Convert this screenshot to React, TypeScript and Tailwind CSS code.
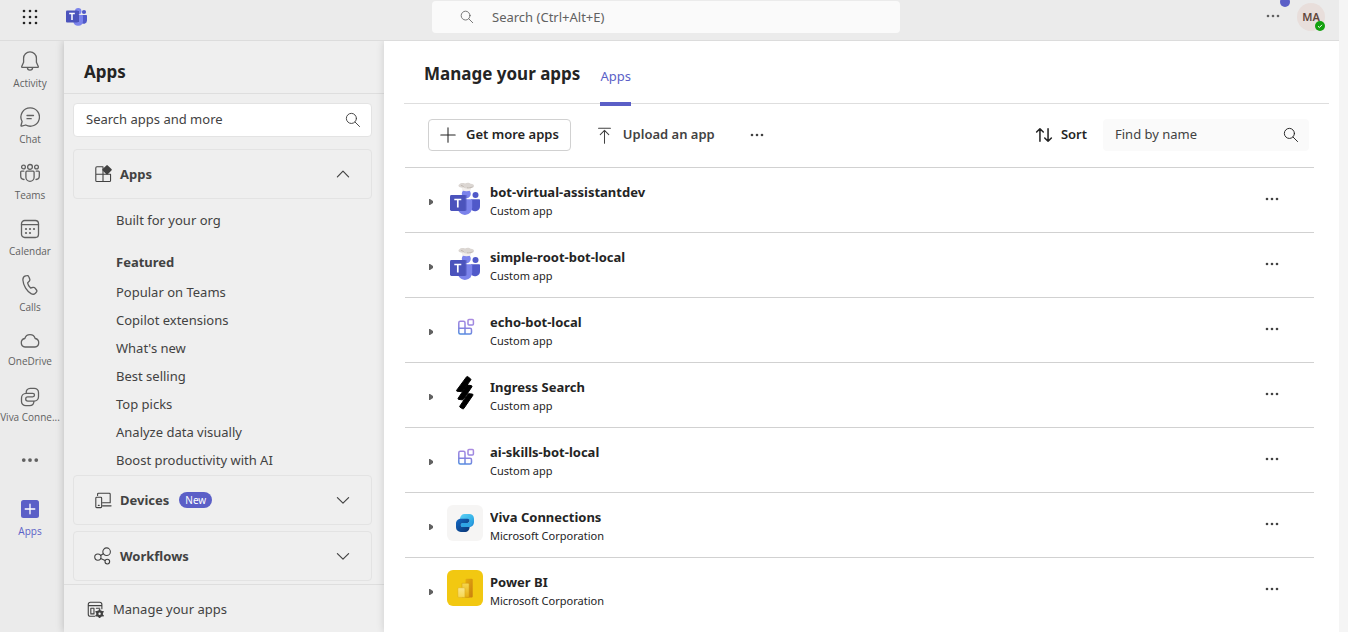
import React from "react";

type IconProps = { className?: string; children: React.ReactNode; size?: number; sw?: number };

function Icon({ className = "", children, size = 20, sw = 1.2 }: IconProps) {
  return (
    <svg
      aria-hidden="true"
      width={size}
      height={size}
      viewBox="0 0 20 20"
      fill="none"
      stroke="currentColor"
      strokeWidth={sw}
      strokeLinecap="round"
      strokeLinejoin="round"
      className={"shrink-0 " + className}
    >
      {children}
    </svg>
  );
}

const BellIcon = () => (
  <Icon sw={1.300}>
    <path d="M10 .8a6.400 6.400 0 0 0-6.400 6.400v4L1.700 15.600c-.1.400.1.800.6.800h15.400c.5 0 .7-.4.600-.8l-1.900-4.400v-4A6.400 6.400 0 0 0 10 .8Z" />
    <path d="M7.400 16.600a2.600 2.600 0 0 0 5.200 0" />
  </Icon>
);
const ChatIcon = () => (
  <Icon sw={1.300}>
    <path d="M10.200.8a9.200 9.200 0 1 1-4.500 17.200l-4 1.200c-.4.1-.8-.2-.7-.7l1.100-4A9.200 9.200 0 0 1 10.200.8Z" />
    <path d="M7 8.500h6.500M7 11.700h4.200" />
  </Icon>
);
const TeamsIcon = () => (
  <Icon sw={1.300}>
    <circle cx="10" cy="3.900" r="2.400" />
    <circle cx="3.500" cy="4" r="1.900" />
    <circle cx="16.500" cy="4" r="1.900" />
    <path d="M6.900 8.200h6.200c.6 0 1 .4 1 1v5a4.100 4.100 0 0 1-8.200 0v-5c0-.6.4-1 1-1Z" />
    <path d="M3.800 8.200H1.600c-.5 0-.9.400-.9.900v4a3.400 3.400 0 0 0 3.300 3.400M16.200 8.200h2.200c.5 0 .9.400.9.900v4a3.400 3.400 0 0 1-3.300 3.400" />
  </Icon>
);
const CalendarIcon = () => (
  <Icon sw={1.300}>
    <rect x="1.500" y="1.500" width="17" height="17" rx="3.200" />
    <path d="M1.500 5.700h17" />
    <g fill="currentColor" stroke="none">
      <circle cx="6" cy="10" r="1.100" />
      <circle cx="10" cy="10" r="1.100" />
      <circle cx="14" cy="10" r="1.100" />
      <circle cx="6" cy="14" r="1.100" />
      <circle cx="10" cy="14" r="1.100" />
    </g>
  </Icon>
);
const CallIcon = () => (
  <Icon sw={1.300}>
    <path d="m5.600.9 1.200-.2c.9-.2 1.800.3 2.100 1.200l.8 2.100c.3.800.1 1.700-.5 2.300L7.600 7.900c.3 1.900 1.500 3.900 3 5.100l2.400-.6c.8-.2 1.600.1 2.100.7l1.400 1.900c.5.700.4 1.700-.2 2.300l-.9.900c-1.100 1.100-2.700 1.300-4 .6C7 16.600 3.200 10.400 2.900 5c-.1-1.900 1-3.600 2.700-4.100Z" />
  </Icon>
);
const CloudIcon = () => (
  <Icon sw={1.300}>
    <path d="M5.100 16a4.300 4.300 0 0 1-.3-8.500 5.400 5.400 0 0 1 10.400 0A4.300 4.300 0 0 1 14.900 16H5.100Z" />
  </Icon>
);
const VivaIcon = () => (
  <Icon sw={1.300}>
    <path d="M6.200 6.300C5.900 3.400 7.700 1.300 10.200 1.300h4a4.300 4.300 0 0 1 4.300 4.300v4.200a4.300 4.300 0 0 1-4.300 4.300H7.800a2 2 0 0 1 0-4.200h4.900a1.800 1.800 0 0 0 0-3.600H6.100a4.600 4.600 0 0 0-4.600 4.600v3.500a4.300 4.300 0 0 0 4.300 4.300h3.800c2.500 0 4.300-1.700 4.300-4.400" />
  </Icon>
);

function Dots({ size = 16, r = 1.300 }: { size?: number; r?: number }) {
  return (
    <svg aria-hidden="true" width={size} height={size} viewBox="0 0 16 16" fill="currentColor" className="shrink-0">
      <circle cx="3" cy="8" r={r} />
      <circle cx="8" cy="8" r={r} />
      <circle cx="13" cy="8" r={r} />
    </svg>
  );
}

function SearchIcon({ size = 16 }: { size?: number }) {
  return (
    <Icon size={size} sw={1.200}>
      <circle cx="8" cy="8" r="6.300" />
      <path d="m12.600 12.600 5.600 5.600" />
    </Icon>
  );
}

function TeamsLogo() {
  return (
    <svg aria-hidden="true" width="21" height="18" viewBox="0 0 21 18">
      <circle cx="12.200" cy="3.200" r="3.200" fill="#7b83eb" />
      <circle cx="18" cy="4" r="2.100" fill="#5059c9" />
      <path d="M15 7h5.300c.4 0 .7.300.7.700v4.800a3.300 3.300 0 0 1-6 1.900V7Z" fill="#5059c9" />
      <path d="M8 7h8.300c.4 0 .7.300.7.700v5.500a4.900 4.900 0 0 1-9.700.6L8 7Z" fill="#7b83eb" />
      <path d="M10.500 3H13v11H8.500L10.500 3Z" fill="#33389a" opacity=".65" />
      <rect y="2.600" width="12" height="12" rx="1" fill="#4b53bc" />
      <path d="M3.200 5.500h5.600M6 5.500v6.500" stroke="#fff" strokeWidth="1.500" />
    </svg>
  );
}

function BotLogo() {
  return (
    <svg aria-hidden="true" width="36" height="36" viewBox="0 0 36 36">
      <circle cx="19.300" cy="13.700" r="4.500" fill="#7b83eb" />
      <circle cx="28.500" cy="15" r="3" fill="#5059c9" />
      <path d="M24 19.300h8c.6 0 1 .4 1 1v6a5 5 0 0 1-9 3V19.300Z" fill="#5059c9" />
      <path d="M12 19.300h12.200c.6 0 1 .4 1 1v7.500a7.300 7.300 0 0 1-14.200 2.200L12 19.300Z" fill="#7b83eb" />
      <path d="M16 15h3.700v14.500c0 .9-.5 1.500-1.500 1.500H13L16 15Z" fill="#4a51b8" opacity=".55" />
      <rect x="3" y="15" width="15.700" height="16" rx="1.400" fill="#4b53bc" />
      <path d="M7.300 19.500h7M10.800 19.500v8" stroke="#fff" strokeWidth="1.700" />
      <path d="M14.500 7.500h10l-1 3c-2.500.9-5.500.9-8 0Z" fill="#f3efec" />
      <path d="M12.500 4.200c1.500-1.400 4-1.200 5.500-.7 2-1 4.500-.8 5.500.3 2.200-.1 3.800 1 3.500 2.400-.6 1.700-3.200 2.200-4.600 1.900-2.500.6-4.400.4-5.900-.5-1.800.4-4.500-.2-5-1.600-.1-.9.300-1.500 1-1.800Z" fill="#dbd6d2" />
      <path d="M14 5.400c1.300.3 2.500 1 3 1.800M20 7.800c2 .5 4 0 5.500-1" stroke="#b9b0aa" strokeWidth=".8" fill="none" />
    </svg>
  );
}

function BlocksLogo() {
  return (
    <svg aria-hidden="true" width="36" height="36" viewBox="0 0 36 36" fill="none" strokeWidth="1.500">
      <defs>
        <linearGradient id="blocks" gradientUnits="userSpaceOnUse" x1="20" y1="9" x2="16" y2="27">
          <stop offset="0" stopColor="#a98ae0" />
          <stop offset=".5" stopColor="#8b83e0" />
          <stop offset="1" stopColor="#3f8ede" />
        </linearGradient>
      </defs>
      <g stroke="url(#blocks)">
        <path d="M18 18.300v-5.500c0-.9-.6-1.500-1.500-1.500h-3.200c-.9 0-1.500.6-1.500 1.500v9.800c0 .9.600 1.500 1.500 1.500h9.700c.9 0 1.500-.6 1.500-1.500v-2.800c0-.9-.6-1.500-1.500-1.500H11.800M18 18.300v5.800" />
        <rect x="21" y="9.500" width="5.400" height="5.400" rx="1" />
      </g>
    </svg>
  );
}

function IngressLogo() {
  return (
    <svg aria-hidden="true" width="36" height="36" viewBox="0 0 36 36" stroke="#000" strokeWidth="5.600" strokeLinejoin="round">
      <g strokeWidth="1" fill="#000">
        <path d="m9.700 15.200 9.800-13.300c.4-.5.900-.5 1.300-.2l2.700 2.100c.5.400.5.800.2 1.300l-8 11c-.4.500-.8.600-1.400.5l-4.200-.3c-.5-.1-.7-.6-.4-1.100Z" />
        <path d="m11.200 23.200 8.300-12.500c.3-.5.700-.7 1.300-.6l3.500.5c.7.100.9.700.5 1.300l-8.300 12.300c-.4.500-.8.700-1.400.6l-3.500-.4c-.6-.1-.8-.6-.4-1.200Z" />
        <path d="m12.800 31.200 8-12c.3-.4.700-.6 1.200-.5l3.300.4c.7.100.9.700.5 1.300l-9 13.100c-.4.500-.8.600-1.300.2l-2.500-1.500c-.4-.3-.5-.6-.2-1Z" />
      </g>
    </svg>
  );
}

function VivaLogo() {
  return (
    <svg aria-hidden="true" width="36" height="36" viewBox="0 0 36 36">
      <defs>
        <linearGradient id="vivaA" x1="0" y1="0" x2="1" y2="1">
          <stop offset="0" stopColor="#5fd0f5" />
          <stop offset=".6" stopColor="#35b3e8" />
          <stop offset="1" stopColor="#1b7fd0" />
        </linearGradient>
        <linearGradient id="vivaB" x1="0" y1="0" x2="1" y2="1">
          <stop offset="0" stopColor="#1269c4" />
          <stop offset="1" stopColor="#0b3472" />
        </linearGradient>
      </defs>
      <rect width="36" height="36" rx="6" fill="#f6f5f4" />
      <path d="M13 14c0-3 2-5 4.600-5h4.600C25 9 27 11 27 13.800V17c0 3-2.200 5-5 5h-6c-1.500 0-2.200-1-2.200-2s.8-2 2.200-2h4.500a2 2 0 0 0 0-4H13Z" fill="url(#vivaA)" />
      <path d="M20.500 13.800h-6.700C11 13.800 9 16 9 18.500v3.800C9 25 11 27 13.800 27h4.400c2.300 0 4.200-1.700 4.500-5H16c-1.500 0-2.200-1-2.200-2s.8-2.100 2.200-2.100h4.500a2 2 0 0 0 0-4.100Z" fill="url(#vivaB)" />
      <path d="M14 20c0-1.200.8-2.100 2.200-2.100h4.600c1.200 0 2-.9 2-2 0-.4-.1-.8-.3-1.100 3 .8 3.300 4 1.500 5.700-.9 1-2.200 1.500-4 1.500h-4c-1.300 0-2-1-2-2Z" fill="#2fa5e4" />
    </svg>
  );
}

function PowerBiLogo() {
  return (
    <svg aria-hidden="true" width="36" height="36" viewBox="0 0 36 36">
      <defs>
        <linearGradient id="pbA" x1="0" y1="0" x2="1" y2="1">
          <stop offset="0" stopColor="#e6ad10" />
          <stop offset="1" stopColor="#c87e0e" />
        </linearGradient>
        <linearGradient id="pbB" x1="0" y1="0" x2="0" y2="1">
          <stop offset="0" stopColor="#f6d751" />
          <stop offset="1" stopColor="#e6ad10" />
        </linearGradient>
        <linearGradient id="pbC" x1="0" y1="0" x2="0" y2="1">
          <stop offset="0" stopColor="#f9e589" />
          <stop offset="1" stopColor="#f6d751" />
        </linearGradient>
      </defs>
      <rect width="36" height="36" rx="6" fill="#f2c811" />
      <rect x="18.500" y="8.800" width="7.200" height="18.600" rx="1" fill="url(#pbA)" />
      <path d="M15 13.300h6.200c.5 0 .9.400.9.900v13.200H15Z" fill="url(#pbB)" stroke="#c9950d" strokeWidth=".4" />
      <path d="M11.800 17.800h5.200c.5 0 .9.400.9.900v8.700h-6.100c-.5 0-.9-.4-.9-.9v-7.800c0-.5.400-.9.900-.9Z" fill="url(#pbC)" stroke="#d5a514" strokeWidth=".4" />
    </svg>
  );
}

const rail = [
  { label: "Activity", icon: <BellIcon />, gap: "gap-1" },
  { label: "Chat", icon: <ChatIcon />, gap: "gap-1" },
  { label: "Teams", icon: <TeamsIcon />, gap: "gap-1" },
  { label: "Calendar", icon: <CalendarIcon />, gap: "gap-1" },
  { label: "Calls", icon: <CallIcon />, gap: "gap-1" },
  { label: "OneDrive", icon: <CloudIcon />, gap: "gap-0.5" },
  { label: "Viva Conne...", icon: <VivaIcon />, gap: "gap-0.5" },
];

const featured = [
  "Popular on Teams",
  "Copilot extensions",
  "What's new",
  "Best selling",
  "Top picks",
  "Analyze data visually",
  "Boost productivity with AI",
];

const apps = [
  { name: "bot-virtual-assistantdev", by: "Custom app", logo: <BotLogo /> },
  { name: "simple-root-bot-local", by: "Custom app", logo: <BotLogo /> },
  { name: "echo-bot-local", by: "Custom app", logo: <BlocksLogo /> },
  { name: "Ingress Search", by: "Custom app", logo: <IngressLogo /> },
  { name: "ai-skills-bot-local", by: "Custom app", logo: <BlocksLogo /> },
  { name: "Viva Connections", by: "Microsoft Corporation", logo: <VivaLogo /> },
  { name: "Power BI", by: "Microsoft Corporation", logo: <PowerBiLogo /> },
];

function Chevron({ up = false }: { up?: boolean }) {
  return (
    <Icon size={16} sw={1.500} className="ml-auto">
      <path d={up ? "m3 13.500 7-7 7 7" : "m3 7 7 7 7-7"} />
    </Icon>
  );
}

function Section({ icon, title, badge, open = false }: { icon: React.ReactNode; title: string; badge?: string; open?: boolean }) {
  return (
    <button
      type="button"
      aria-expanded={open}
      className="flex h-[50px] w-full shrink-0 items-center rounded border border-[#e3e3e3] px-5 text-left text-[#424242]"
    >
      {icon}
      <span className="ml-2 pt-0.5 text-[13px] font-bold">{title}</span>
      {badge && (
        <span className="ml-2.5 flex h-4 items-center rounded-full bg-[#5b5fc7] px-1.5 text-[10px] text-white">{badge}</span>
      )}
      <Chevron up={open} />
    </button>
  );
}

function TopBar() {
  return (
    <header className="grid h-[41px] shrink-0 grid-cols-[1fr_468px_1fr] items-center border-b border-[#dcdcdc] bg-[#ebebeb] pr-[7px] pb-1.5">
      <div className="flex items-center gap-7 pl-[22px]">
        <button type="button" aria-label="App launcher" className="text-[#242424]">
          <svg aria-hidden="true" width="16" height="16" viewBox="0 0 16 16" fill="currentColor">
            {[2, 8, 14].map((y) => [2, 8, 14].map((x) => <circle key={x + "-" + y} cx={x} cy={y} r="1.300" />))}
          </svg>
        </button>
        <TeamsLogo />
      </div>
      <label className="flex h-8 items-center gap-[18px] rounded bg-[#fafafa] pl-7 pr-3 text-[#616161]">
        <SearchIcon size={14} />
        <input
          type="search"
          aria-label="Search"
          placeholder="Search (Ctrl+Alt+E)"
          className="min-w-0 flex-1 bg-transparent pt-0.5 text-[13px] outline-none placeholder:text-[#616161] placeholder:opacity-100"
        />
      </label>
      <div className="flex items-center justify-end gap-4 pr-[7px]">
        <button type="button" aria-label="Settings and more" className="relative mb-0.5 text-[#616161]">
          <Dots />
          <span className="absolute bottom-[17px] left-[15px] size-2.5 rounded-full bg-[#5b5fc7]" />
        </button>
        <button
          type="button"
          aria-label="Account"
          className="relative flex size-7 items-center justify-center rounded-full bg-[#e8dedb] text-[11px] font-semibold text-[#5f463c]"
        >
          MA
          <svg aria-hidden="true" width="10" height="10" viewBox="0 0 10 10" className="absolute right-0 bottom-0">
            <circle cx="5" cy="5" r="5" fill="#13a10e" />
            <path d="m3 5.200 1.400 1.300L7 3.800" stroke="#fff" strokeWidth="1" fill="none" />
          </svg>
        </button>
      </div>
    </header>
  );
}

function Rail() {
  const item = "flex h-14 w-[60px] flex-col items-center pt-2.5 whitespace-nowrap font-['Open_Sans',sans-serif] text-[10px] leading-4";
  return (
    <nav aria-label="Main" className="flex w-16 shrink-0 flex-col bg-[#ebebeb] text-[#616161]">
      {rail.map((r) => (
        <a key={r.label} href="#" className={item + " " + r.gap}>
          {r.icon}
          {r.label}
        </a>
      ))}
      <button type="button" aria-label="More apps" className="flex h-14 w-[60px] items-center justify-center pb-0.5">
        <Dots size={20} r={1.500} />
      </button>
      <a href="#" className={item + " gap-1 text-[#5b5fc7]"}>
        <svg aria-hidden="true" width="20" height="20" viewBox="0 0 20 20">
          <rect x="1" y="1" width="18" height="18" rx="2.500" fill="#5b5fc7" />
          <path d="M10 5.200v9.600M5.200 10h9.600" stroke="#fff" strokeWidth="1.300" strokeLinecap="round" />
        </svg>
        Apps
      </a>
    </nav>
  );
}

function Sidebar() {
  const link = "flex h-7 items-center";
  return (
    <aside className="relative z-10 flex w-80 shrink-0 flex-col bg-[#efefef] text-[13px] text-[#424242] shadow-[0_0_8px_rgba(0,0,0,0.22)]">
      <h2 className="flex h-[53px] shrink-0 items-center border-b border-[#dedede] pt-2.5 pl-5 text-[17px] font-bold text-[#242424]">Apps</h2>
      <div className="flex min-h-0 flex-1 flex-col overflow-hidden pt-[9px] pr-3 pl-[9px]">
        <label className="flex h-[34px] shrink-0 items-center rounded border border-[#e3e3e3] bg-white pr-2.5 pl-3">
          <input
            type="search"
            aria-label="Search apps and more"
            placeholder="Search apps and more"
            className="min-w-0 flex-1 outline-none placeholder:text-[#424242] placeholder:opacity-100"
          />
          <SearchIcon />
        </label>
        <div className="mt-3 flex flex-col">
          <Section
            open
            title="Apps"
            icon={
              <Icon size={18} sw={1.200}>
                <path d="M9.500 2H3.200C2.500 2 2 2.500 2 3.200v14c0 .7.500 1.200 1.200 1.200h14c.7 0 1.200-.5 1.200-1.200V10.500M10 2v16.400M2 10.200h16.400" />
                <path d="m14.500 1.200 4.100 4.100-4.100 4.100-4.100-4.100Z" fill="currentColor" strokeWidth="2.200" />
              </Icon>
            }
          />
          <div className="flex flex-col pt-2 pl-[43px]">
            <a href="#" className={link}>
              Built for your org
            </a>
            <h3 className="mt-3.5 mb-0.5 flex h-7 items-center font-bold">Featured</h3>
            {featured.map((f) => (
              <a key={f} href="#" className={link}>
                {f}
              </a>
            ))}
          </div>
          <div className="flex flex-col gap-1.5">
            <Section
              title="Devices"
              badge="New"
              icon={
                <Icon size={18} sw={1.200}>
                  <path d="M4 5V3.500C4 2.900 4.400 2.500 5 2.500h12c.6 0 1 .4 1 1V13H9.500M9.500 16.500H19" />
                  <rect x="2" y="7" width="6.500" height="11.500" rx="1" />
                  <path d="M4.800 16h1" />
                </Icon>
              }
            />
            <Section
              title="Workflows"
              icon={
                <Icon size={18} sw={1.200}>
                  <circle cx="14" cy="5.200" r="4.200" />
                  <circle cx="4.300" cy="11.200" r="3.500" />
                  <circle cx="14.800" cy="16.200" r="2.600" />
                  <path d="m7.300 9.400 3-1.900M7.500 12.700l4.800 2.300" />
                </Icon>
              }
            />
          </div>
        </div>
      </div>
      <a href="#" className="flex h-12 shrink-0 items-center gap-[9px] border-t border-[#dedede] pt-0.5 pl-[23px]">
        <Icon size={17} sw={1.300}>
          <path d="M17.500 9V4c0-1.400-1-2.500-2.500-2.500H4C2.500 1.500 1.500 2.600 1.500 4v11.500C1.500 17 2.500 18 4 18h5M1.500 5.500h16" />
          <path d="M4.500 8.500h3.700v6.700H4.500ZM11 8.500h4" />
          <circle cx="14.800" cy="15" r="2.700" strokeWidth="2.600" />
          <path d="M14.800 10.400v1M14.800 18.600v1M10.800 12.700l1 .6M17.800 16.700l1 .6M10.800 17.300l1-.6M17.800 13.300l1-.6" strokeWidth="2" />
        </Icon>
        Manage your apps
      </a>
    </aside>
  );
}

function Main() {
  return (
    <main className="relative z-20 flex min-w-0 flex-1 flex-col overflow-hidden bg-white text-[13px] text-[#242424] shadow-[0_0_8px_rgba(0,0,0,0.14)]">
      <div className="mr-2.5 ml-5 flex h-[63px] shrink-0 items-stretch gap-5 border-b border-[#dedede] pl-5">
        <h1 className="flex items-center pt-1 text-[17px] font-bold">Manage your apps</h1>
        <a href="#" className="relative flex items-center pt-2.5 text-[#5b5fc7]">
          Apps
          <span className="absolute inset-x-0 -bottom-[3px] h-1 bg-[#5b5fc7]" />
        </a>
      </div>
      <div className="mr-[30px] mb-px ml-11 flex h-[62px] shrink-0 items-center font-semibold">
        <button type="button" className="flex h-8 items-center gap-2.5 rounded border border-[#d1d1d1] px-[11px]">
          <Icon size={16} sw={1.300}>
            <path d="M10 1v18M1 10h18" />
          </Icon>
          Get more apps
        </button>
        <button type="button" className="ml-[25px] flex items-center gap-2.5 text-[#424242]">
          <Icon size={17} sw={1.200}>
            <path d="M3 1.500h14M10 19V4.500M5 9l5-5 5 5" />
          </Icon>
          Upload an app
        </button>
        <button type="button" aria-label="More options" className="ml-[34px] text-[#424242]">
          <Dots />
        </button>
        <button type="button" className="ml-auto flex items-center gap-2">
          <Icon size={18} sw={1.700}>
            <path d="M5.500 17V3M1.800 6.700 5.500 3l3.700 3.700M14.500 3v14M10.800 13.300l3.700 3.700 3.700-3.700" />
          </Icon>
          Sort
        </button>
        <label className="ml-4 flex h-8 w-[206px] items-center rounded bg-[#fafafa] pr-2.5 pl-3 font-normal">
          <input
            type="search"
            aria-label="Find by name"
            placeholder="Find by name"
            className="min-w-0 flex-1 bg-transparent outline-none placeholder:text-[#424242] placeholder:opacity-100"
          />
          <SearchIcon />
        </label>
      </div>
      <ul className="mr-[25px] ml-[21px] shrink-0">
        {apps.map((a) => (
          <li key={a.name} className="flex h-[65px] items-center border-t border-[#d1d1d1] pr-[34px] pl-6">
            <button type="button" aria-label={"Expand " + a.name} className="mt-1 text-[#616161]">
              <svg aria-hidden="true" width="4" height="6" viewBox="0 0 4 6" fill="currentColor">
                <path d="M0 0h1l3 2v2L1 6H0Z" />
              </svg>
            </button>
            <div className="mb-1 ml-3.5 shrink-0">{a.logo}</div>
            <div className="mt-0.5 ml-[7px] min-w-0 flex-1 leading-5">
              <div className="truncate font-bold">{a.name}</div>
              <div className="truncate text-[11px] leading-[18px]">{a.by}</div>
            </div>
            <button type="button" aria-label={"More options for " + a.name} className="mb-0.5 text-[#424242]">
              <Dots />
            </button>
          </li>
        ))}
      </ul>
    </main>
  );
}

export default function App() {
  return (
    <div className="flex h-screen overflow-hidden bg-[#f5f5f5] pr-[9px] font-['Noto_Sans','Segoe_UI',sans-serif]">
      <div className="flex min-w-0 flex-1 flex-col">
        <TopBar />
        <div className="flex min-h-0 flex-1 overflow-hidden">
          <Rail />
          <Sidebar />
          <Main />
        </div>
      </div>
    </div>
  );
}
